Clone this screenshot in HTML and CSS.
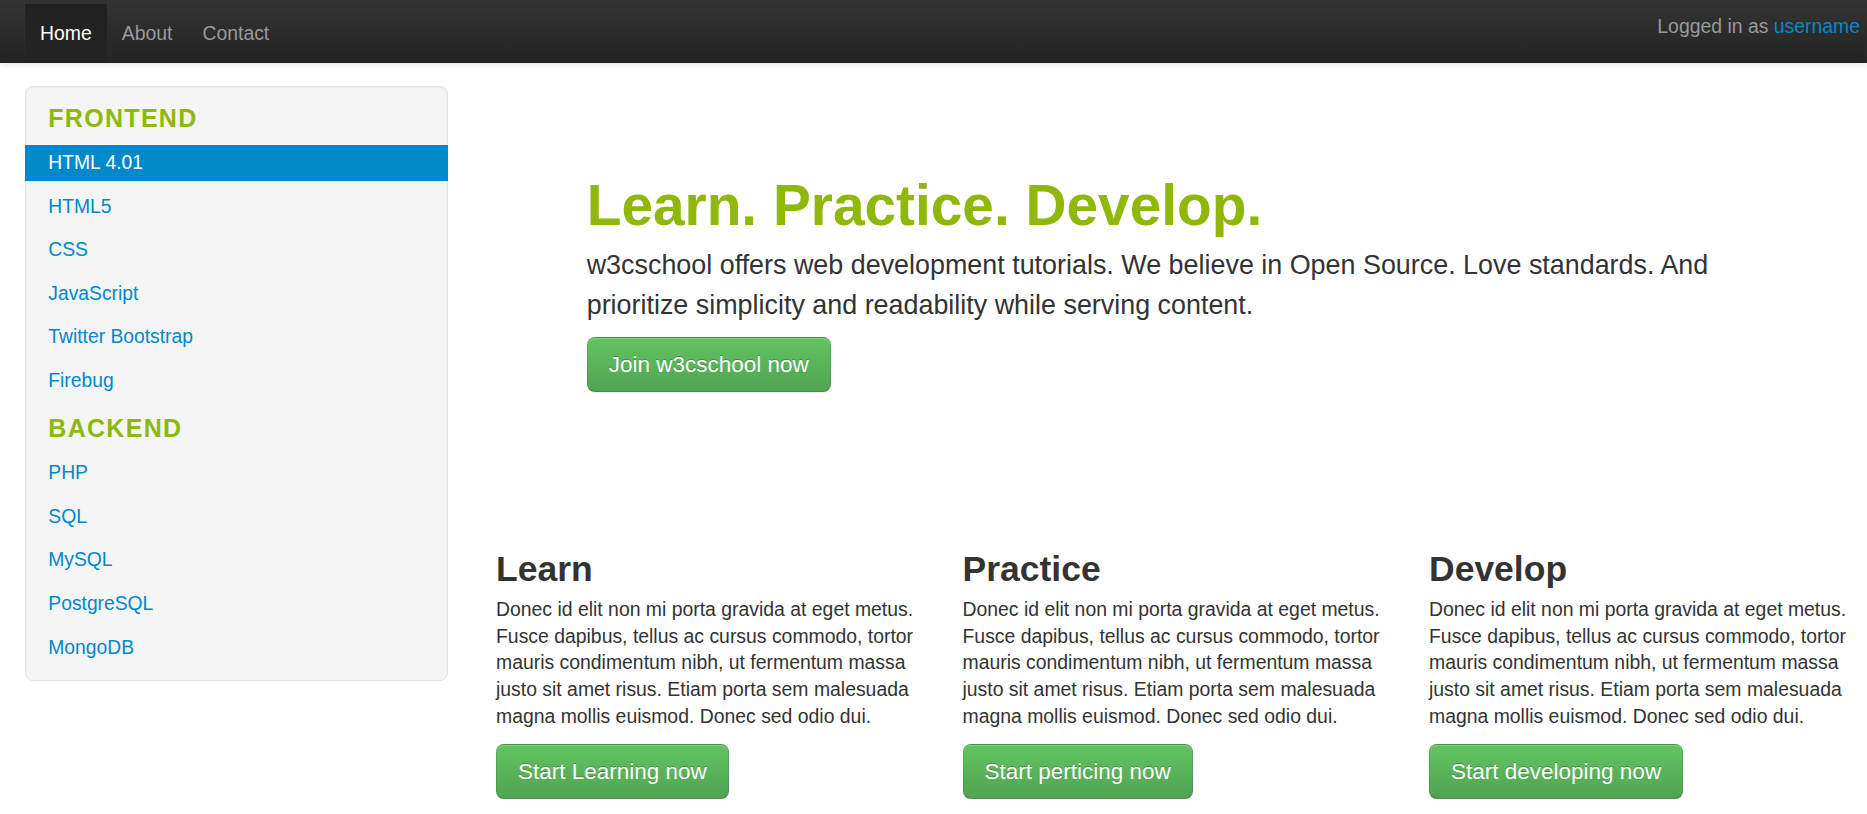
FILE: index.html
```html
<!DOCTYPE html>
<html lang="en">
<head>
<meta charset="utf-8">
<title>w3cschool</title>
<link rel="stylesheet" href="styles.css">
</head>
<body>
<header class="navbar">
  <ul class="nav">
    <li><a class="nav-link active" href="#">Home</a></li>
    <li><a class="nav-link" href="#">About</a></li>
    <li><a class="nav-link" href="#">Contact</a></li>
  </ul>
  <p class="navbar-text">Logged in as <a class="navbar-link" href="#">username</a></p>
</header>
<div class="page">
  <aside class="sidebar">
    <h3 class="nav-header">FRONTEND</h3>
    <ul class="nav-list">
      <li><a class="side-link active" href="#">HTML 4.01</a></li>
      <li><a class="side-link" href="#">HTML5</a></li>
      <li><a class="side-link" href="#">CSS</a></li>
      <li><a class="side-link" href="#">JavaScript</a></li>
      <li><a class="side-link" href="#">Twitter Bootstrap</a></li>
      <li><a class="side-link" href="#">Firebug</a></li>
    </ul>
    <h3 class="nav-header second">BACKEND</h3>
    <ul class="nav-list">
      <li><a class="side-link" href="#">PHP</a></li>
      <li><a class="side-link" href="#">SQL</a></li>
      <li><a class="side-link" href="#">MySQL</a></li>
      <li><a class="side-link" href="#">PostgreSQL</a></li>
      <li><a class="side-link" href="#">MongoDB</a></li>
    </ul>
  </aside>
  <main class="content">
    <section class="hero">
      <h1 class="hero-title">Learn. Practice. Develop.</h1>
      <p class="hero-text">w3cschool offers web development tutorials. We believe in Open Source. Love standards. And prioritize simplicity and readability while serving content.</p>
      <a class="btn btn-success" href="#">Join w3cschool now</a>
    </section>
    <div class="columns">
      <div class="col">
        <h2 class="col-title">Learn</h2>
        <p class="col-text">Donec id elit non mi porta gravida at eget metus. Fusce dapibus, tellus ac cursus commodo, tortor mauris condimentum nibh, ut fermentum massa justo sit amet risus. Etiam porta sem malesuada magna mollis euismod. Donec sed odio dui.</p>
        <a class="btn btn-success btn-col" href="#">Start Learning now</a>
      </div>
      <div class="col">
        <h2 class="col-title">Practice</h2>
        <p class="col-text">Donec id elit non mi porta gravida at eget metus. Fusce dapibus, tellus ac cursus commodo, tortor mauris condimentum nibh, ut fermentum massa justo sit amet risus. Etiam porta sem malesuada magna mollis euismod. Donec sed odio dui.</p>
        <a class="btn btn-success btn-col" href="#">Start perticing now</a>
      </div>
      <div class="col">
        <h2 class="col-title">Develop</h2>
        <p class="col-text">Donec id elit non mi porta gravida at eget metus. Fusce dapibus, tellus ac cursus commodo, tortor mauris condimentum nibh, ut fermentum massa justo sit amet risus. Etiam porta sem malesuada magna mollis euismod. Donec sed odio dui.</p>
        <a class="btn btn-success btn-col" href="#">Start developing now</a>
      </div>
    </div>
  </main>
</div>
</body>
</html>
```
FILE: styles.css
```css
* { box-sizing: border-box; }

html, body {
  margin: 0;
  padding: 0;
  background: #fff;
}

body {
  font-family: "Liberation Sans", Arial, Helvetica, sans-serif;
  font-size: 19.3px;
  line-height: 26.7px;
  color: #333;
  overflow: hidden;
}

a { text-decoration: none; }

/* ---------- navbar ---------- */
.navbar {
  height: 63px;
  display: flex;
  justify-content: space-between;
  align-items: flex-start;
  padding: 0 7px 0 25px;
  background: linear-gradient(#333333, #242424);
  box-shadow: 0 1px 8px rgba(0, 0, 0, 0.12);
  position: relative;
  z-index: 2;
}

.nav {
  list-style: none;
  margin: 0;
  padding: 4px 0 0;
  display: flex;
}

.nav-link {
  display: block;
  padding: 16px 15px 16px;
  line-height: 26.7px;
  color: #999;
  font-size: 19.4px;
}

.nav-link.active {
  color: #fff;
  background: linear-gradient(#212121, #232323);
}

.navbar-text {
  margin: 0;
  line-height: 53.3px;
  color: #999;
  font-size: 19.4px;
}

.navbar-link { color: #0088cc; }

/* ---------- page ---------- */
.page {
  display: flex;
  align-items: flex-start;
  padding: 23px 25px 0 25px;
}

/* ---------- sidebar ---------- */
.sidebar {
  width: 423px;
  flex: none;
  background: #f5f5f5;
  border: 1px solid #e3e3e3;
  border-radius: 8px;
  padding: 13px 0 6.5px;
  box-shadow: inset 0 1px 1px rgba(0, 0, 0, 0.04);
}

.nav-header {
  margin: 0 0 9px;
  padding-left: 22.3px;
  font-size: 25px;
  line-height: 36px;
  font-weight: bold;
  letter-spacing: 1.3px;
  color: #8fb80a;
}

.nav-header.second { margin-top: 11.2px; }

.nav-list {
  list-style: none;
  margin: 0;
  padding: 0;
}

.nav-list li { margin-bottom: 7.6px; }

.side-link {
  display: block;
  margin: 0 -1px;
  padding: 0 0 0 23.3px;
  line-height: 36px;
  color: #0088cc;
}

.side-link.active {
  background: #0088cc;
  color: #fff;
}

/* ---------- content ---------- */
.content {
  flex: 1;
  margin-left: 48px;
}

.hero {
  padding: 88px 0 0 90.7px;
}

.hero-title {
  margin: 0;
  font-size: 56.8px;
  line-height: 64px;
  font-weight: bold;
  color: #8fb80a;
}

.hero-text {
  margin: 6.5px 0 0;
  width: 1170px;
  font-size: 26.9px;
  line-height: 40px;
  color: #333;
}

.btn {
  display: inline-block;
  border: 1px solid #4a9a4a;
  border-color: rgba(0, 0, 0, 0.1) rgba(0, 0, 0, 0.1) rgba(0, 0, 0, 0.25);
  border-radius: 8px;
  padding: 13px 21px;
  font-size: 22.5px;
  line-height: 27px;
  color: #fff;
  text-shadow: 0 -1px 0 rgba(0, 0, 0, 0.25);
  box-shadow: inset 0 1px 0 rgba(255, 255, 255, 0.2), 0 1px 2px rgba(0, 0, 0, 0.08);
}

.btn-success {
  background-color: #5bb75b;
  background-image: linear-gradient(#62c462, #51a351);
}

.hero .btn { margin-top: 12.8px; }

.columns {
  margin-top: 157px;
  display: grid;
  grid-template-columns: 430px 430px 430px;
  column-gap: 36.5px;
}

.col-title {
  margin: 0;
  font-size: 35.5px;
  line-height: 40px;
  font-weight: bold;
  color: #333;
}

.col-text {
  margin: 6.5px 0 0;
  font-size: 19.4px;
  line-height: 26.7px;
}

.btn-col { margin-top: 14.9px; }
```
